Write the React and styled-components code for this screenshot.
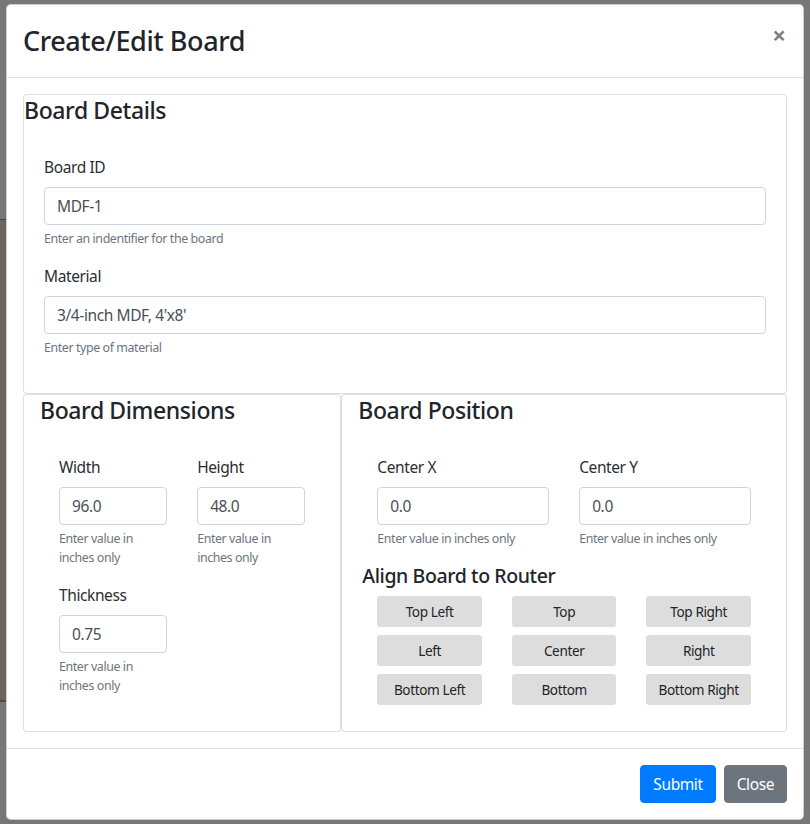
import React, { useState } from "react";
import styled, { createGlobalStyle } from "styled-components";

const GlobalStyle = createGlobalStyle`
  * { box-sizing: border-box; }
  body {
    margin: 0;
    background: #777777;
    font-family: "Noto Sans", "Open Sans", sans-serif;
    letter-spacing: -0.025em;
    color: #212529;
  }
`;

const Page = styled.div`
  position: relative;
  min-height: 824px;
  padding: 4px 6px;
  background: #777777;
`;

// strip of the page behind the backdrop, visible at the left edge
const BehindStrip = styled.div`
  position: absolute;
  left: 0;
  top: 219px;
  width: 6px;
  height: 483px;
  background: #6d655b;
  border-top: 1px solid #4b3f31;
  border-bottom: 2px solid #5a4a35;
`;

const Dialog = styled.div`
  position: relative;
  background: #fff;
  border: 1px solid rgba(0, 0, 0, 0.2);
  border-radius: 5px;
  display: flex;
  flex-direction: column;
`;

const Header = styled.div`
  display: flex;
  align-items: flex-start;
  justify-content: space-between;
  padding: 16px;
  border-bottom: 1px solid #dee2e6;
`;

const Title = styled.h5`
  margin: 0;
  font-size: 27px;
  line-height: 40px;
  font-weight: 500;
`;

const CloseX = styled.button`
  padding: 18px 17px 14px 16px;
  margin: -16px -16px -16px auto;
  background: transparent;
  border: 0;
  font-family: inherit;
  font-size: 24px;
  font-weight: 700;
  line-height: 1;
  color: #000;
  opacity: 0.5;
  text-shadow: 0 1px 0 #fff;
  cursor: pointer;
`;

const Body = styled.div`
  padding: 16px;
`;

const Card = styled.div`
  border: 1px solid rgba(0, 0, 0, 0.125);
  border-radius: 4px;
  background: #fff;
`;

const CardTitle = styled.h4`
  margin: 0 0 11px;
  padding: 1px ${(p) => (p.$inset ? "16px" : "0")} 0;
  font-size: 23px;
  line-height: 28px;
  font-weight: 500;
`;

const CardBody = styled.div`
  padding: 20px;
`;

const Inner = styled.div`
  padding: 0 15px;
`;

const SplitRow = styled.div`
  display: grid;
  grid-template-columns: 5fr 7fr;
`;

const FieldGrid = styled.div`
  display: grid;
  grid-template-columns: 1fr 1fr;
  column-gap: 30px;
`;

const FormGroup = styled.div`
  margin-bottom: 16px;
`;

const Label = styled.label`
  display: block;
  margin-bottom: 8px;
  font-size: 15.5px;
  line-height: 24px;
  color: #2b2f33;
`;

const Input = styled.input`
  display: block;
  width: 100%;
  height: 38px;
  padding: 6px 12px;
  font-family: inherit;
  letter-spacing: inherit;
  font-size: 15.5px;
  color: #495057;
  background: #fff;
  border: 1px solid #ced4da;
  border-radius: 4px;
  outline: none;
`;

const Help = styled.small`
  display: block;
  margin-top: 4px;
  font-size: 12.4px;
  line-height: 19px;
  color: #6c757d;
`;

const SubTitle = styled.h5`
  margin: 0 0 8px;
  font-size: 19.5px;
  line-height: 24px;
  font-weight: 500;
`;

const ButtonGrid = styled.div`
  display: grid;
  grid-template-columns: repeat(3, 1fr);
  column-gap: 30px;
  row-gap: 8px;
`;

const AlignButton = styled.button`
  height: 31px;
  padding: 4px 8px;
  font-family: inherit;
  letter-spacing: inherit;
  font-size: 13.6px;
  line-height: 21px;
  color: #212529;
  background: #dddddd;
  border: 0;
  border-radius: 3px;
  cursor: pointer;
`;

const Footer = styled.div`
  display: flex;
  justify-content: flex-end;
  gap: 8px;
  padding: 16px;
  border-top: 1px solid #dee2e6;
`;

const FooterButton = styled.button`
  height: 38px;
  padding: 6px 12px;
  font-family: inherit;
  letter-spacing: inherit;
  font-size: 15.5px;
  line-height: 24px;
  color: #fff;
  background: ${(p) => (p.$primary ? "#007bff" : "#6c757d")};
  border: 1px solid ${(p) => (p.$primary ? "#007bff" : "#6c757d")};
  border-radius: 4px;
  cursor: pointer;
`;

const Field = ({ label, value, help }) => (
  <FormGroup>
    <Label>{label}</Label>
    <Input defaultValue={value} />
    <Help>{help}</Help>
  </FormGroup>
);

const alignments = [
  "Top Left", "Top", "Top Right",
  "Left", "Center", "Right",
  "Bottom Left", "Bottom", "Bottom Right",
];

const App = () => {
  const [align, setAlign] = useState("Center");

  return (
    <Page>
      <GlobalStyle />
      <BehindStrip />
      <Dialog>
        <Header>
          <Title>Create/Edit Board</Title>
          <CloseX aria-label="Close">×</CloseX>
        </Header>

        <Body>
          <Card>
            <CardTitle>Board Details</CardTitle>
            <CardBody>
              <Field label="Board ID" value="MDF-1" help="Enter an indentifier for the board" />
              <Field label="Material" value="3/4-inch MDF, 4'x8'" help="Enter type of material" />
            </CardBody>
          </Card>

          <SplitRow>
            <Card>
              <CardTitle $inset>Board Dimensions</CardTitle>
              <CardBody>
                <Inner>
                  <FieldGrid>
                    <Field label="Width" value="96.0" help="Enter value in inches only" />
                    <Field label="Height" value="48.0" help="Enter value in inches only" />
                    <Field label="Thickness" value="0.75" help="Enter value in inches only" />
                  </FieldGrid>
                </Inner>
              </CardBody>
            </Card>

            <Card>
              <CardTitle $inset>Board Position</CardTitle>
              <CardBody>
                <Inner>
                  <FieldGrid>
                    <Field label="Center X" value="0.0" help="Enter value in inches only" />
                    <Field label="Center Y" value="0.0" help="Enter value in inches only" />
                  </FieldGrid>
                </Inner>
                <SubTitle>Align Board to Router</SubTitle>
                <Inner>
                  <ButtonGrid>
                    {alignments.map((a) => (
                      <AlignButton key={a} onClick={() => setAlign(a)} aria-pressed={align === a}>
                        {a}
                      </AlignButton>
                    ))}
                  </ButtonGrid>
                </Inner>
              </CardBody>
            </Card>
          </SplitRow>
        </Body>

        <Footer>
          <FooterButton $primary>Submit</FooterButton>
          <FooterButton>Close</FooterButton>
        </Footer>
      </Dialog>
    </Page>
  );
};

export default App;
